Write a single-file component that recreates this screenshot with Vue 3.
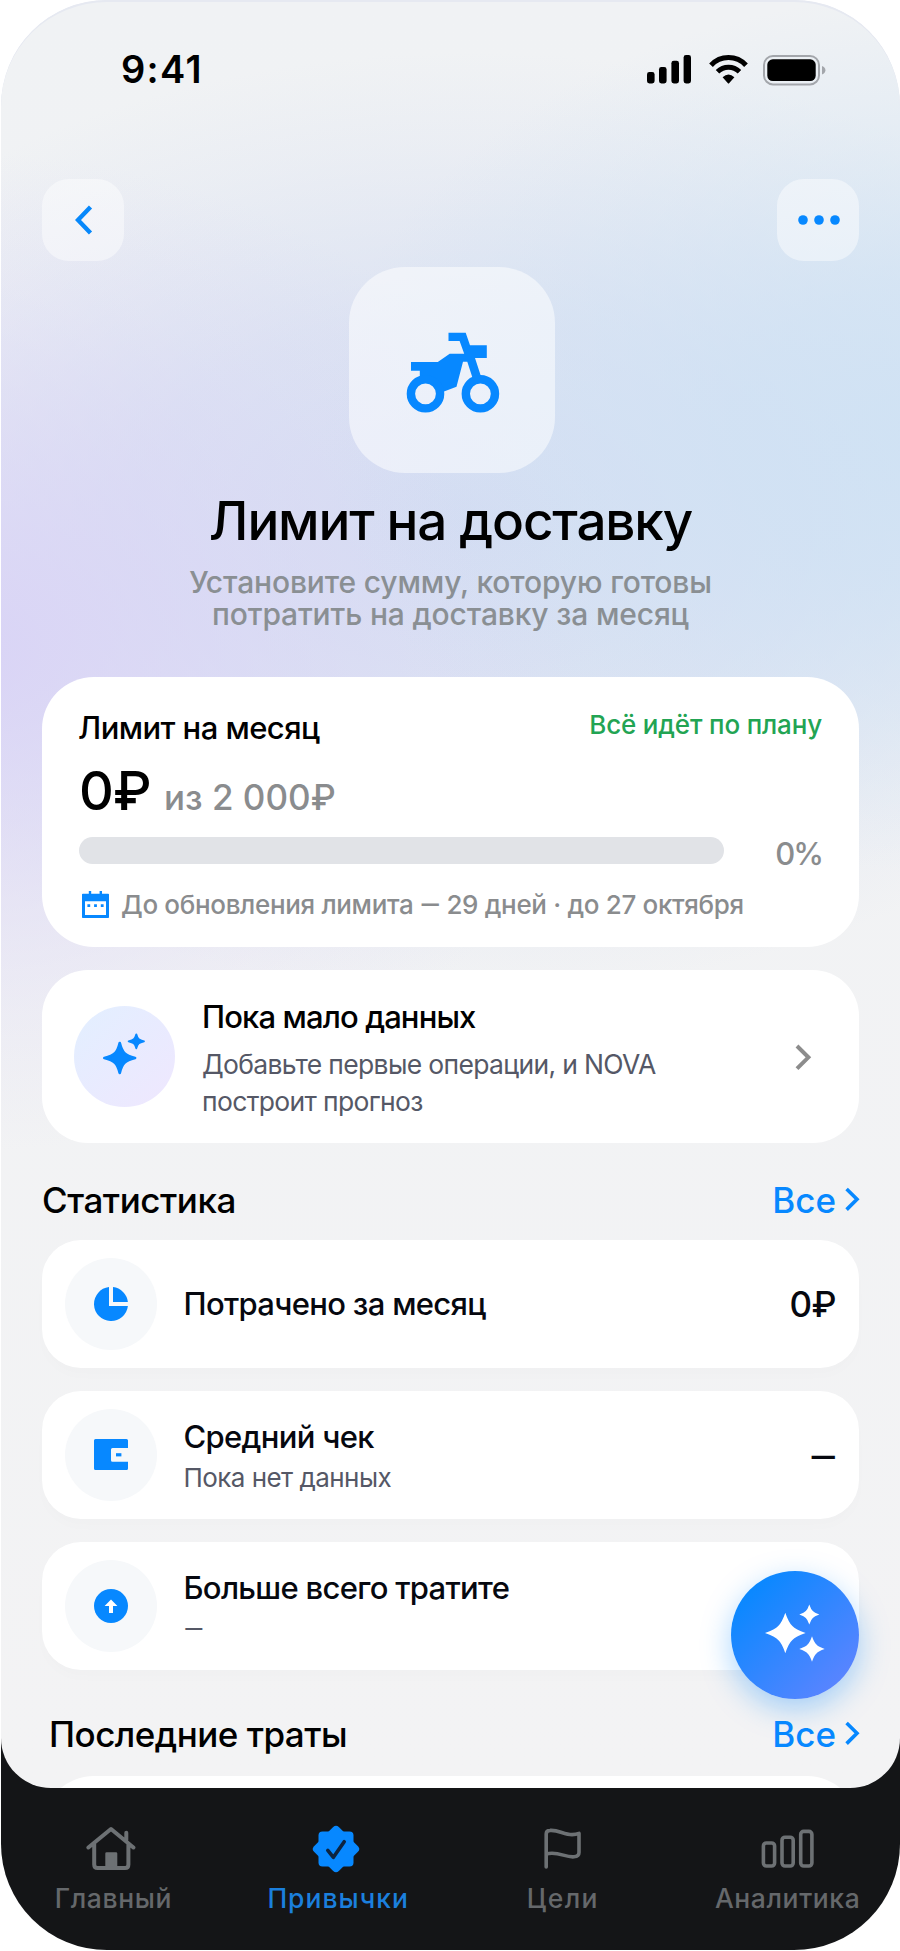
<script setup>
const stats = [
  { icon: 'pie', title: 'Потрачено за месяц', value: '0₽' },
  { icon: 'wallet', title: 'Средний чек', note: 'Пока нет данных', value: '—' },
  { icon: 'up', title: 'Больше всего тратите', note: '—' },
]

const tabs = [
  { id: 'home', label: 'Главный' },
  { id: 'habits', label: 'Привычки', active: true },
  { id: 'goals', label: 'Цели' },
  { id: 'analytics', label: 'Аналитика' },
]

const star = 'M0-1Q.17-.5 .35-.35Q.5-.17 1 0Q.5.17 .35.35Q.17.5 0 1Q-.17.5-.35.35Q-.5.17-1 0Q-.5-.17-.35-.35Q-.17-.5 0-1Z'
</script>

<template>
  <div class="phone">
    <main class="screen">
      <div class="status">
        <span class="time">9:41</span>
        <div class="status-icons">
          <svg class="signal" width="44" height="29" viewBox="0 0 44 29">
            <rect x="0" y="17" width="7.6" height="11.5" rx="2.4" />
            <rect x="12" y="12" width="7.6" height="16.5" rx="2.4" />
            <rect x="24.4" y="5.8" width="7.6" height="22.7" rx="2.4" />
            <rect x="36.6" y="0" width="7.4" height="28.5" rx="2.4" />
          </svg>
          <svg class="wifi" width="39" height="29" viewBox="0 0 39 29">
            <path d="M2 10.2A23.8 23.8 0 0 1 37 10.2M8.5 16.7A15.7 15.7 0 0 1 30.5 16.7" fill="none" stroke="#000" stroke-width="5" />
            <path d="M13.6 22.2Q19.5 16.8 25.4 22.2L20.3 28Q19.5 29 18.7 28Z" />
          </svg>
          <svg class="battery" width="63" height="31" viewBox="0 0 63 31">
            <rect x="1" y="1" width="55" height="28.4" rx="9" fill="none" stroke="#a3a6ab" stroke-width="2" />
            <rect x="4.3" y="4.3" width="48.4" height="21.8" rx="5.5" />
            <path d="M59 11Q62.4 12.3 62.4 15.2T59 19.4Z" fill="#a3a6ab" />
          </svg>
        </div>
      </div>

      <div class="toolbar">
        <button class="tool">
          <svg width="18" height="30" viewBox="0 0 18 30"><path d="M15.5 2L3 15L15.5 28" fill="none" stroke="#0788fb" stroke-width="4.4" /></svg>
        </button>
        <button class="tool">
          <svg width="42" height="10" viewBox="0 0 42 10" fill="#0788ff"><circle cx="5" cy="5" r="4.8" /><circle cx="21" cy="5" r="4.8" /><circle cx="37" cy="5" r="4.8" /></svg>
        </button>
      </div>

      <header class="hero">
        <div class="tile">
          <svg width="94" height="82" viewBox="406 332 94 82">
            <path fill="#0788ff" d="M448.5 332.7H465.7L470 345.3H486.8V358H475L480.7 375.5L472.4 377.5L467.3 361.7H463L456.5 386.7L444 391.5L434 383.5L425.5 380H419.8V370.7H411V362H437.8L449.7 353.7H464.2L459.6 341H448.5Z" />
            <g fill="none" stroke="#0788ff" stroke-width="8.4"><circle cx="425.5" cy="393.8" r="14.6" /><circle cx="480.4" cy="393.8" r="14.6" /></g>
          </svg>
        </div>
        <h1>Лимит на доставку</h1>
        <p>Установите сумму, которую готовы<br />потратить на доставку за месяц</p>
      </header>

      <section class="card limit">
        <div class="limit-head">
          <h2>Лимит на месяц</h2>
          <span class="ok">Всё идёт по плану</span>
        </div>
        <div class="sum"><b>0₽</b><span>из 2 000₽</span></div>
        <div class="progress">
          <div class="track"></div>
          <span class="percent">0%</span>
        </div>
        <div class="renew">
          <svg width="27" height="27" viewBox="0 0 27 27" fill="#0788ff">
            <path fill-rule="evenodd" d="M6.8 0H9.2V2.8H17.6V0H20V2.8H26.2Q27 2.8 27 3.6V26.2Q27 27 26.2 27H.8Q0 27 0 26.2V3.6Q0 2.8 .8 2.8H6.8ZM3 10.3V24H24V10.3Z" />
            <path d="M5.4 13.3H8.2V16H5.4ZM12.1 13.3H14.9V16H12.1ZM18.8 13.3H21.6V16H18.8Z" />
          </svg>
          <span>До обновления лимита <i class="dash">—</i> 29 дней · до 27 октября</span>
        </div>
      </section>

      <section class="card forecast">
        <div class="orb">
          <svg width="44" height="44" viewBox="0 0 44 44" fill="#0788ff" stroke="#0788ff" stroke-linejoin="round">
            <path stroke-width="2.8" d="M17.7 11.2Q19.5 18.4 22.4 21.2Q25.4 24 33 26Q25.4 28 22.4 30.8Q19.5 33.6 17.7 40.8Q16 33.6 13 30.8Q10 28 2.4 26Q10 24 13 21.2Q16 18.4 17.7 11.2Z" />
            <path stroke-width="1.8" d="M34.3 2.3Q35.2 5.8 36.8 7.2Q38.2 8.4 42 9.3Q38.2 10.2 36.8 11.4Q35.2 12.8 34.3 16.3Q33.4 12.8 31.8 11.4Q30.4 10.2 26.6 9.3Q30.4 8.4 31.8 7.2Q33.4 5.8 34.3 2.3Z" />
          </svg>
        </div>
        <div class="forecast-text">
          <h2>Пока мало данных</h2>
          <p>Добавьте первые операции, и NOVA<br />построит прогноз</p>
        </div>
        <svg class="more" width="17" height="27" viewBox="0 0 17 27"><path d="M2 2L13.4 13.3L2 24.7" fill="none" stroke="#8c8c8c" stroke-width="4" /></svg>
      </section>

      <div class="section-head">
        <h3>Статистика</h3>
        <a>Все<svg width="15" height="25" viewBox="0 0 15 25"><path d="M1.6 2L12 12.3L1.6 22.6" fill="none" stroke="#0788ff" stroke-width="3.6" /></svg></a>
      </div>

      <div class="stats">
        <section v-for="s in stats" :key="s.icon" class="row">
          <div class="row-icon">
            <svg v-if="s.icon === 'pie'" width="34" height="34" viewBox="0 0 34 34" fill="#0788ff">
              <path d="M15 .1A17 17 0 1 0 33.9 19H15Z" /><path d="M19 .1V15H33.9A17 17 0 0 0 19 .1Z" />
            </svg>
            <svg v-else-if="s.icon === 'wallet'" width="34" height="31" viewBox="0 0 34 31" fill="#0788ff">
              <path d="M1.5 0H32.5Q34 0 34 1.5V9H18.5Q17 9 17 10.5V21.3Q17 22.8 18.5 22.8H34V29.5Q34 31 32.5 31H1.5Q0 31 0 29.5V1.5Q0 0 1.5 0Z" /><path d="M22 14.2H27.4V17.4H22Z" />
            </svg>
            <svg v-else width="34" height="34" viewBox="0 0 34 34">
              <circle cx="17" cy="17" r="17" fill="#0788ff" /><path d="M17 10.4L23.4 17H19V24H15V17H10.6Z" fill="#fff" />
            </svg>
          </div>
          <div class="row-text" :class="{ double: s.note }">
            <h4>{{ s.title }}</h4>
            <p v-if="s.note" :class="{ dash: s.note === '—' }">{{ s.note }}</p>
          </div>
          <span v-if="s.value" class="value" :class="{ dash: s.value === '—' }">{{ s.value }}</span>
        </section>
      </div>

      <div class="section-head recent">
        <h3>Последние траты</h3>
        <a>Все<svg width="15" height="25" viewBox="0 0 15 25"><path d="M1.6 2L12 12.3L1.6 22.6" fill="none" stroke="#0788ff" stroke-width="3.6" /></svg></a>
      </div>
      <section class="card recent-card"></section>

      <button class="fab">
        <svg width="128" height="128" viewBox="0 0 128 128" fill="#fff">
          <path :d="star" transform="translate(54.3 62) scale(20.3)" />
          <path :d="star" transform="translate(78.3 43.4) scale(10)" />
          <path :d="star" transform="translate(81 78) scale(12.7)" />
        </svg>
      </button>
    </main>

    <nav class="tabs">
      <a v-for="t in tabs" :key="t.id" class="tab" :class="[t.id, { active: t.active }]">
        <svg v-if="t.id === 'home'" width="50" height="46" viewBox="0 0 50 46" fill="none" stroke="currentColor" stroke-width="4" stroke-linecap="round" stroke-linejoin="round">
          <path d="M2.4 21.5L25 3L47.4 21.5M8.2 18V38.5Q8.2 42 11.7 42H39Q42.4 42 42.4 38.5V18M40.3 6.8V14" />
          <path d="M20.6 42V27.6H30V42Z" fill="currentColor" stroke-width="2.6" />
        </svg>
        <svg v-else-if="t.id === 'habits'" width="48" height="48" viewBox="-24 -24 48 48" fill="#0788ff">
          <rect x="-17.5" y="-17.5" width="35" height="35" rx="4" />
          <rect x="-17.5" y="-17.5" width="35" height="35" rx="4" transform="rotate(45)" />
          <path d="M-8.2 1.4L-2.6 8.3L8.2-7.3" fill="none" stroke="#0d2440" stroke-width="3.6" stroke-linecap="round" stroke-linejoin="round" />
        </svg>
        <svg v-else-if="t.id === 'goals'" width="38" height="42" viewBox="0 0 38 42" fill="none" stroke="currentColor" stroke-width="3.6" stroke-linecap="round" stroke-linejoin="round">
          <path d="M2.2 39V6Q2.2 2.6 6 2.4C14 1.6 20 6.6 28 6.6Q32 6.6 35 5.4V24.5Q35 28.4 30 28.8C21 29.6 14 22.8 2.2 26" />
        </svg>
        <svg v-else width="54" height="40" viewBox="0 0 54 40" fill="none" stroke="currentColor" stroke-width="3.6">
          <rect x="2.4" y="14" width="11.2" height="23" rx="3" /><rect x="21" y="8.2" width="11.2" height="28.8" rx="3" /><rect x="39.7" y="2.4" width="11.2" height="34.6" rx="3" />
        </svg>
        <span>{{ t.label }}</span>
      </a>
    </nav>
  </div>
</template>

<style>
body { margin: 0; background: #fff; }
</style>

<style scoped>
* { box-sizing: border-box; }
h1, h2, h3, h4, p { margin: 0; font-weight: 500; }
button { border: 0; padding: 0; font: inherit; }
svg { display: block; flex: none; }
.phone {
  width: 899px; height: 1950px; margin: 0 0 0 1px; overflow: hidden; border-radius: 106px;
  display: flex; flex-direction: column;
  background: linear-gradient(#e6e9f1 1600px, #141517 1600px);
  font-family: Inter, "Liberation Sans", sans-serif; font-weight: 500; color: #000;
}
.screen {
  position: relative; flex: none; height: 1788px; overflow: hidden; padding: 0 41px;
  border: solid #e6e9f1; border-width: 2px 0 0; border-radius: 106px 106px 50px 50px;
  background:
    radial-gradient(ellipse 640px 440px at 960px 430px, rgba(205, 225, 244, .9) 0%, rgba(205, 225, 244, .7) 35%, rgba(205, 225, 244, .25) 75%, rgba(205, 225, 244, 0) 100%),
    radial-gradient(ellipse 640px 500px at -40px 650px, rgba(216, 210, 246, .95) 0%, rgba(216, 210, 246, .6) 35%, rgba(216, 210, 246, .2) 72%, rgba(216, 210, 246, 0) 100%),
    radial-gradient(ellipse 760px 470px at 470px 520px, rgba(211, 220, 242, .95) 0%, rgba(211, 220, 242, .65) 45%, rgba(211, 220, 242, .2) 80%, rgba(211, 220, 242, 0) 100%),
    linear-gradient(#f0f2f4, #f3f3f4);
}
.status { height: 176.5px; padding: 47px 33.5px 0 79px; display: flex; justify-content: space-between; align-items: flex-start; }
.time { font-size: 38px; line-height: 40px; font-weight: 600; letter-spacing: 1.3px; }
.status-icons { display: flex; gap: 18px; padding-top: 6px; }
.battery { margin-left: -3px; margin-top: -.5px; }

.toolbar { height: 82.5px; display: flex; justify-content: space-between; }
.tool { width: 82px; height: 82.5px; border-radius: 27px; background: rgba(255, 255, 255, .45); display: flex; align-items: center; justify-content: center; }
.tool:first-child { padding-left: 2px; }
.tool:last-child { padding-left: 1px; }

.hero { height: 416px; padding-top: 6px; display: flex; flex-direction: column; align-items: center; text-align: center; }
.tile { width: 206px; height: 206px; margin-left: 2px; border-radius: 56px; background: rgba(255, 255, 255, .52); display: flex; align-items: center; justify-content: center; padding: 5px 0 0 2px; }
h1 { margin-top: 15.7px; font-size: 53px; line-height: 64px; letter-spacing: -1.15px; }
.hero p { margin-top: 13.5px; font-size: 30px; line-height: 32px; letter-spacing: -.15px; color: #8a8f93; }

.card { background: #fff; border-radius: 52px; }
h2, h4 { font-size: 31px; line-height: 38px; }
.limit { height: 270px; padding: 31.7px 37px 0 36px; }
.limit-head { display: flex; justify-content: space-between; }
.limit-head h2 { letter-spacing: -.56px; }
.ok { margin-top: -2.7px; font-size: 26px; line-height: 38px; letter-spacing: -.16px; color: #22a453; }
.sum { height: 56px; margin-top: 16.2px; display: flex; align-items: baseline; line-height: 56px; }
.sum b { width: 86px; padding-left: 1px; font-weight: 500; font-size: 54px; letter-spacing: -.86px; }
.sum span { font-size: 35px; color: #8a8c8e; }
.progress { height: 27px; margin-top: 18.1px; display: flex; justify-content: space-between; }
.track { width: 645px; margin-left: 1px; border-radius: 14px; background: #e1e3e7; }
.percent { margin-top: 2.7px; font-size: 31px; line-height: 27px; letter-spacing: -2px; color: #8a8c8e; }
.renew { margin-top: 25.5px; padding-left: 4px; display: flex; gap: 12px; font-size: 26px; line-height: 32px; letter-spacing: -.33px; color: #8a8c8e; white-space: nowrap; }
.renew svg { margin-top: 1.5px; }
.dash { font-family: Roboto, sans-serif; font-style: normal; }

.forecast { height: 173px; margin-top: 23px; border-radius: 46px; display: flex; padding-left: 32px; }
.orb { width: 100.5px; height: 100.5px; margin-top: 36px; border-radius: 50%; background: linear-gradient(135deg, #e2efff, #efe7fe); display: flex; align-items: center; justify-content: center; }
.orb svg { margin-top: -4px; }
.forecast-text { flex: 1; padding: 27.7px 0 0 27.5px; }
.forecast-text h2 { letter-spacing: -.88px; }
.forecast-text p { margin-top: 10.2px; font-size: 26.5px; line-height: 37px; font-weight: 400; letter-spacing: -.66px; color: #555866; }
.more { margin: 73.5px 47px 0 0; }

.section-head { height: 97px; padding-top: 34.5px; display: flex; justify-content: space-between; align-items: flex-start; }
h3 { font-size: 35px; line-height: 44px; letter-spacing: -.45px; }
.section-head a { display: flex; gap: 9px; color: #0788ff; font-size: 35px; line-height: 44px; }
.section-head a svg { margin-top: 9px; margin-right: -1px; }

.stats { display: grid; gap: 23.5px; }
.row { height: 127.5px; border-radius: 39px; background: #fff; display: flex; align-items: center; padding: 0 23px 0 22.5px; box-shadow: 0 8px 12px rgba(0, 0, 0, .01); }
.row-icon { width: 92px; height: 92px; border-radius: 50%; background: #f6f8fa; display: flex; align-items: center; justify-content: center; }
.row-text { flex: 1; padding-left: 27px; }
.double { padding-top: 4px; }
h4 { letter-spacing: -.69px; color: #06080f; }
.row-text p { margin-top: 5.8px; padding-bottom: 1px; font-size: 26px; line-height: 32px; font-weight: 400; letter-spacing: -.55px; color: #555866; }
.value { font-size: 35px; line-height: 44px; letter-spacing: -.5px; color: #06080f; }
.value.dash { padding-top: 9px; }

.recent { height: 106px; padding-top: 42.8px; }
.recent h3 { padding-left: 7px; letter-spacing: -.52px; }
.recent-card { height: 120px; }

.fab { position: absolute; left: 730px; top: 1569px; width: 128px; height: 128px; border-radius: 50%; background: linear-gradient(135deg, #0a88ff 15%, #5d84ff 90%); box-shadow: 0 10px 30px rgba(7, 136, 255, .34); }

.tabs { flex: 1; display: grid; grid-template-columns: repeat(4, 1fr); }
.tab { display: flex; flex-direction: column; align-items: center; color: #6d7174; font-size: 26.5px; line-height: 32px; white-space: nowrap; }
.tab svg { height: 48px; margin: 37px 0 8.5px; }
.tab span { letter-spacing: .6px; color: #65686b; }
.home svg, .habits svg { transform: translateX(-2px); }
.habits span { letter-spacing: 1px; color: #1b7fdd; }
.goals span { letter-spacing: 1.4px; }
</style>
